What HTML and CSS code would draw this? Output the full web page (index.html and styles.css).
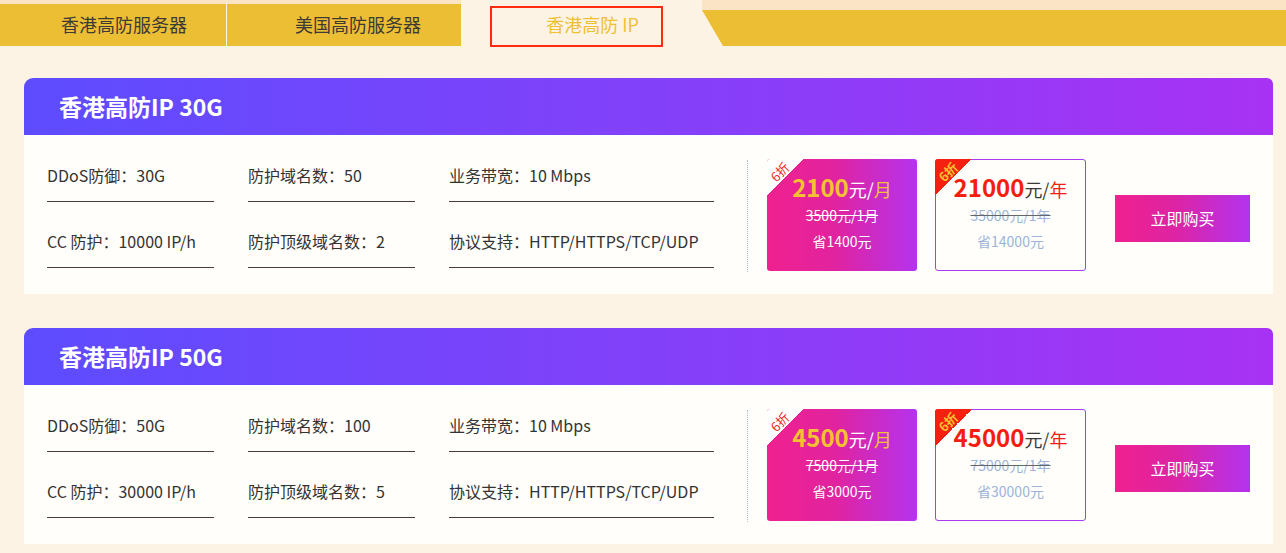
FILE: index.html
```html
<!DOCTYPE html>
<html lang="zh-CN">
<head>
<meta charset="utf-8">
<title>香港高防IP</title>
<link rel="stylesheet" href="styles.css">
</head>
<body>
<nav class="tabs">
  <div class="tab">香港高防服务器</div>
  <div class="tab tab-second">美国高防服务器</div>
  <div class="tab tab-active">香港高防 IP<span class="focus-ring"></span></div>
  <div class="tab-fill"></div>
</nav>

<main class="list">
  <section class="card">
    <h2 class="card-head">香港高防IP 30G</h2>
    <div class="card-body">
      <div class="specs">
        <div class="spec">DDoS防御：30G</div>
        <div class="spec">防护域名数：50</div>
        <div class="spec">业务带宽：10 Mbps</div>
        <div class="spec">CC 防护：10000 IP/h</div>
        <div class="spec">防护顶级域名数：2</div>
        <div class="spec">协议支持：HTTP/HTTPS/TCP/UDP</div>
      </div>
      <div class="divider"></div>
      <div class="price price-month">
        <span class="tag"></span><span class="tag-text">6折</span>
        <div class="p-main"><b>2100</b><span class="unit">元/</span><span class="per">月</span></div>
        <div class="p-old">3500元/1月</div>
        <div class="p-save">省1400元</div>
      </div>
      <div class="price price-year">
        <span class="tag"></span><span class="tag-text">6折</span>
        <div class="p-main"><b>21000</b><span class="unit">元/</span><span class="per">年</span></div>
        <div class="p-old">35000元/1年</div>
        <div class="p-save">省14000元</div>
      </div>
      <a class="buy">立即购买</a>
    </div>
  </section>

  <section class="card">
    <h2 class="card-head">香港高防IP 50G</h2>
    <div class="card-body">
      <div class="specs">
        <div class="spec">DDoS防御：50G</div>
        <div class="spec">防护域名数：100</div>
        <div class="spec">业务带宽：10 Mbps</div>
        <div class="spec">CC 防护：30000 IP/h</div>
        <div class="spec">防护顶级域名数：5</div>
        <div class="spec">协议支持：HTTP/HTTPS/TCP/UDP</div>
      </div>
      <div class="divider"></div>
      <div class="price price-month">
        <span class="tag"></span><span class="tag-text">6折</span>
        <div class="p-main"><b>4500</b><span class="unit">元/</span><span class="per">月</span></div>
        <div class="p-old">7500元/1月</div>
        <div class="p-save">省3000元</div>
      </div>
      <div class="price price-year">
        <span class="tag"></span><span class="tag-text">6折</span>
        <div class="p-main"><b>45000</b><span class="unit">元/</span><span class="per">年</span></div>
        <div class="p-old">75000元/1年</div>
        <div class="p-save">省30000元</div>
      </div>
      <a class="buy">立即购买</a>
    </div>
  </section>
</main>
</body>
</html>
```

FILE: styles.css
```css
* { box-sizing: border-box; }
html, body { margin: 0; padding: 0; }
body {
  background: #fcf3e4;
  font-family: "Noto Sans CJK SC", "Noto Sans", sans-serif;
  color: #333;
  width: 1286px;
  height: 553px;
  overflow: hidden;
}

.tabs {
  display: flex;
  height: 46px;
}
.tab {
  height: 46px;
  border-top: 4px solid #fbe4c6;
  background: #ecbe33;
  color: #3d3a36;
  font-size: 18px;
  line-height: 40px;
  text-align: center;
  padding-left: 22px;
  width: 226px;
}
.tab-second {
  width: 235px;
  padding-left: 28px;
  border-left: 1px solid #fff6e6;
}
.tab-active {
  position: relative;
  width: 241px;
  background: transparent;
  border-top-color: transparent;
  color: #f0c033;
}
.focus-ring {
  position: absolute;
  left: 29px;
  top: 2px;
  width: 173px;
  height: 41px;
  border: 2px solid #ff2a12;
}
.tab-fill {
  flex: 1;
  height: 46px;
  background: linear-gradient(#fbe4c6 0 10px, #ecbe33 10px);
  clip-path: polygon(0 0, 100% 0, 100% 100%, 21px 100%, 0 10px);
}

.list {
  padding: 32px 0 0 24px;
  display: flex;
  flex-direction: column;
  gap: 34px;
}
.card {
  width: 1249px;
  background: #fffefa;
  border-radius: 9px 6px 0 0;
}
.card-head {
  margin: 0;
  height: 57px;
  line-height: 57px;
  padding-left: 35px;
  font-size: 23px;
  font-weight: 700;
  color: #fff;
  border-radius: 9px 6px 0 0;
  background: linear-gradient(90deg, #5d4cfe 0%, #7f42fa 45%, #a832f4 100%);
}
.card-body {
  height: 159px;
  display: flex;
  align-items: flex-start;
  padding: 15px 0 0 23px;
}
.specs {
  display: grid;
  grid-template-columns: 167px 167px 265px;
  column-gap: 34px;
  row-gap: 14px;
}
.spec {
  height: 52px;
  line-height: 50px;
  font-size: 16px;
  color: #333;
  border-bottom: 1px solid #4a3b37;
  white-space: nowrap;
}
.divider {
  width: 0;
  height: 112px;
  margin: 10px 0 0 33px;
  border-left: 1px dotted #aebbd6;
}
.price {
  position: relative;
  margin-top: 9px;
  width: 150px;
  height: 112px;
  border-radius: 3px;
  text-align: center;
  padding-top: 11px;
}
.price-month {
  margin-left: 19px;
  background: linear-gradient(90deg, #f0218f 0%, #e1239f 45%, #b433ee 100%);
  color: #fff;
}
.price-year {
  margin-left: 18px;
  width: 151px;
  background: #fffefa;
  border: 1px solid #a83cf2;
  padding-top: 10px;
}
.tag {
  position: absolute;
  left: 0;
  top: 0;
  width: 36px;
  height: 36px;
  border-top-left-radius: 3px;
}
.price-year .tag { left: -1px; top: -1px; width: 37px; height: 37px; }
.price-month .tag { background: linear-gradient(135deg, #fff 50%, transparent 50%); }
.price-year .tag { background: linear-gradient(135deg, #f5200f 50%, transparent 50%); }
.tag-text {
  position: absolute;
  left: 3px;
  top: 6px;
  font-size: 13px;
  line-height: 14px;
  white-space: nowrap;
  transform: rotate(-45deg);
}
.price-month .tag-text { color: #f0241a; }
.price-year .tag-text { color: #f4c12f; font-weight: 700; left: 2px; top: 5px; }

.p-main {
  height: 34px;
  line-height: 34px;
  white-space: nowrap;
}
.p-main b {
  font-size: 24px;
  font-weight: 700;
}
.unit, .per { font-size: 18px; }
.price-month .p-main b, .price-month .per { color: #f2c232; }
.price-month .unit { color: #fff; }
.price-year .p-main b, .price-year .per { color: #f41d10; }
.price-year .unit { color: #3a3a3a; }

.p-old {
  height: 22px;
  line-height: 22px;
  font-size: 14px;
  text-decoration: line-through;
}
.p-save {
  height: 30px;
  line-height: 30px;
  font-size: 14px;
}
.price-year .p-old,
.price-year .p-save { color: #9db3d7; }
.price-year .p-old { text-decoration-color: #666; }

.buy {
  display: block;
  margin: 45px 0 0 29px;
  width: 135px;
  height: 47px;
  line-height: 47px;
  text-align: center;
  font-size: 16px;
  color: #fff;
  background: linear-gradient(90deg, #f0208f 0%, #dd24a4 45%, #b233ef 100%);
  cursor: pointer;
}
```
